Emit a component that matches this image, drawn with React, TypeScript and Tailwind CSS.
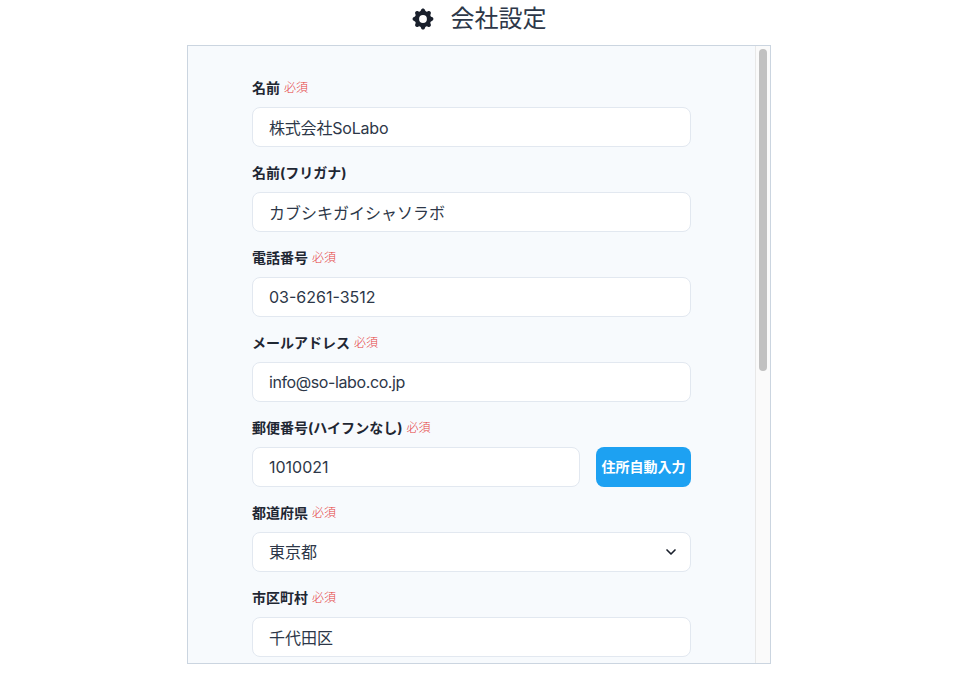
import { ChevronDown } from 'lucide-react'
import { HiCog } from 'react-icons/hi'

const inputClass = 'w-full h-10 px-4 pb-[1px] bg-white border border-[#e2e8f0] rounded-lg text-base text-[#2d3748] outline-none'

function Label({ text, required }: { text: string; required?: boolean }) {
  return (
    <div className="flex items-center h-5 mb-[9px]">
      <label className="text-sm leading-5 font-bold text-[#1f2733]">{text}</label>
      {required && <span className="ml-1 -mt-[1px] text-xs leading-4 font-light text-[#e53e3e]">必須</span>}
    </div>
  )
}

function TextField({ label, value, required, tracking = '' }: { label: string; value?: string; required?: boolean; tracking?: string }) {
  return (
    <div className="mb-4">
      <Label text={label} required={required} />
      <input type="text" defaultValue={value} className={`${inputClass} ${tracking}`} />
    </div>
  )
}

export default function App() {
  return (
    <div className="h-[676px] bg-white font-['Inter','Noto_Sans_CJK_JP',sans-serif]">
      {/* Header */}
      <header className="flex items-center justify-center h-[45px] pb-[7px] pr-[2px]">
        <HiCog className="w-[26px] h-[26px] text-[#1a202c] mr-[15px]" />
        <h1 className="text-2xl leading-8 font-normal text-[#2d3748]">会社設定</h1>
      </header>

      {/* Settings panel */}
      <div className="flex w-[584px] h-[619px] ml-[187px] border border-[#cbd5e0] bg-[#f7fafd]">
        <form className="flex-1 min-w-0 h-full overflow-hidden px-16 pt-8">
          <TextField label="名前" value="株式会社SoLabo" required tracking="tracking-[-0.2px]" />
          <TextField label="名前(フリガナ)" value="カブシキガイシャソラボ" />
          <TextField label="電話番号" value="03-6261-3512" required />
          <TextField label="メールアドレス" value="info@so-labo.co.jp" required tracking="tracking-[-0.4px]" />

          <div className="mb-4">
            <Label text="郵便番号(ハイフンなし)" required />
            <div className="flex gap-4">
              <input type="text" defaultValue="1010021" className={`${inputClass} flex-1 min-w-0`} />
              <button type="button" className="w-[95px] h-10 shrink-0 rounded-lg bg-[#1da1f2] text-sm font-bold text-white whitespace-nowrap">
                住所自動入力
              </button>
            </div>
          </div>

          <div className="mb-4">
            <Label text="都道府県" required />
            <div className="relative">
              <select defaultValue="東京都" className={`${inputClass} appearance-none`}>
                <option>東京都</option>
                <option>神奈川県</option>
                <option>埼玉県</option>
                <option>千葉県</option>
              </select>
              <ChevronDown className="absolute right-[12px] top-[12px] w-4 h-4 text-[#1a202c] pointer-events-none" strokeWidth={2.5} />
            </div>
          </div>

          <TextField label="市区町村" value="千代田区" required />
        </form>

        {/* Scrollbar */}
        <div className="w-[15px] h-full shrink-0 bg-[#fafafa] border-l border-[#e8e8e8] pt-[3px] pl-[3px] pr-[3px]">
          <div className="w-2 h-[322px] rounded-full bg-[#c1c1c1]" />
        </div>
      </div>
    </div>
  )
}
